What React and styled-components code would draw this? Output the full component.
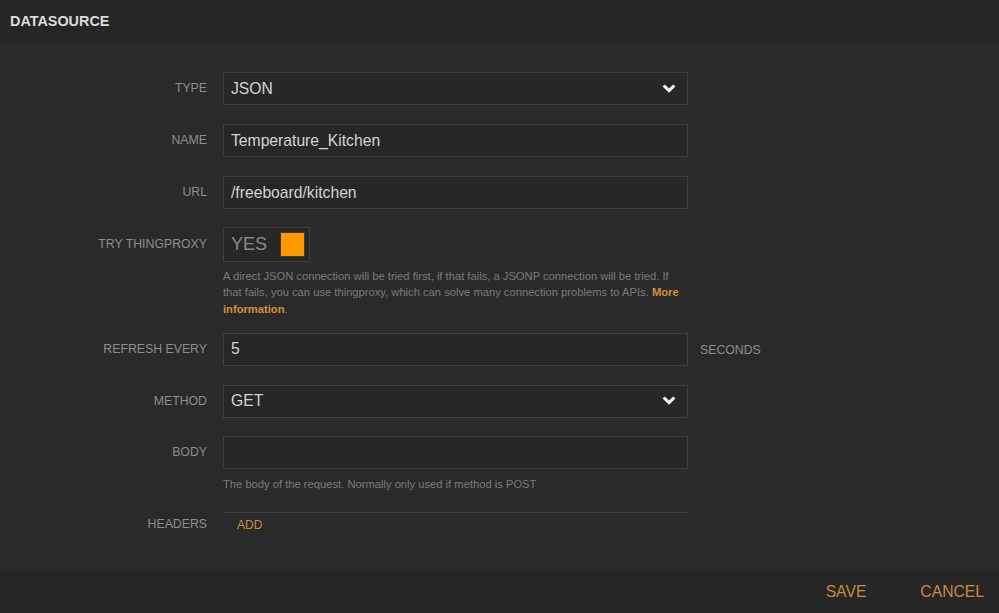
import styled, { createGlobalStyle } from 'styled-components'

const GlobalStyle = createGlobalStyle`
    html, body {
        margin: 0;
        padding: 0;
        background: #2a2a2a;
    }
    * {
        box-sizing: border-box;
    }
`;

const Dialog = styled.div`
    width: 999px;
    height: 613px;
    display: flex;
    flex-direction: column;
    background: #2a2a2a;
    font-family: 'Liberation Sans', Arial, sans-serif;
`;

const Header = styled.header`
    height: 43px;
    flex-shrink: 0;
    display: flex;
    align-items: center;
    padding: 0 0 2px 10px;
    background: #262626;
    color: #dcdcdc;
    font-size: 14.4px;
    font-weight: 700;
`;

const Body = styled.div`
    flex: 1;
    padding-top: 29px;
`;

const Row = styled.div`
    display: grid;
    grid-template-columns: 207px 465px auto;
    column-gap: 16px;
    align-items: start;
    margin-bottom: ${props => props.gap ?? 19}px;
`;

const Label = styled.div`
    text-align: right;
    font-size: 12.3px;
    line-height: ${props => props.lh ?? 33}px;
    color: #8e8e8e;
    text-transform: uppercase;
    white-space: nowrap;
`;

const Field = styled.div`
    display: flex;
    flex-direction: column;
`;

const Input = styled.div`
    height: 33px;
    display: flex;
    align-items: center;
    justify-content: space-between;
    padding: 0 11px 0 7px;
    background: #272727;
    border: 1px solid #3e3e3e;
    color: #d4d4d4;
    font-size: 15.7px;
`;

const Suffix = styled.div`
    font-size: 12.3px;
    line-height: 35px;
    height: 33px;
    color: #8e8e8e;
    margin-left: -4px;
`;

const Toggle = styled.div`
    width: 87px;
    height: 35px;
    display: flex;
    align-items: center;
    justify-content: space-between;
    padding: 0 4px 0 7px;
    background: #272727;
    border: 1px solid #3e3e3e;
    color: #8a8a8a;
    font-size: 18px;
`;

const Knob = styled.span`
    width: 25px;
    height: 25px;
    background: #ff9900;
    border: 1px solid #3a3a3a;
`;

const Help = styled.div`
    margin-top: ${props => props.top ?? 6}px;
    font-size: 11.2px;
    line-height: 16.3px;
    color: #7c7c7c;
`;

const Link = styled.span`
    color: #d7903a;
    font-weight: 700;
`;

const Table = styled.div`
    border-top: 1px solid #3c3c3c;
    padding: 2px 0 0 14px;
`;

const AddButton = styled.span`
    font-size: 12px;
    line-height: 21px;
    color: #cc8d3e;
`;

const Footer = styled.footer`
    height: 43px;
    flex-shrink: 0;
    display: flex;
    align-items: center;
    justify-content: flex-end;
    gap: 54px;
    padding-right: 15px;
    background: #262626;
`;

const FooterButton = styled.span`
    font-size: 15.7px;
    color: #c98b3f;
    text-transform: uppercase;
`;

function Chevron() {
    return (
        <svg width="14" height="10" viewBox="0 0 14 10">
            <path d="M0.5 2.6 L2.8 0.4 L7 4.4 L11.2 0.4 L13.5 2.6 L7 8.8 Z" fill="#f2f2f2" />
        </svg>
    )
}

export default function App() {
    return (
        <>
            <GlobalStyle />
            <Dialog>
                <Header>DATASOURCE</Header>
                <Body>
                    <Row>
                        <Label>Type</Label>
                        <Input>JSON<Chevron /></Input>
                    </Row>
                    <Row>
                        <Label>Name</Label>
                        <Input>Temperature_Kitchen</Input>
                    </Row>
                    <Row gap={18}>
                        <Label>URL</Label>
                        <Input>/freeboard/kitchen</Input>
                    </Row>
                    <Row gap={16}>
                        <Label lh={35}>Try thingproxy</Label>
                        <Field>
                            <Toggle>YES<Knob /></Toggle>
                            <Help>
                                A direct JSON connection will be tried first, if that fails, a JSONP connection will be tried. If
                                that fails, you can use thingproxy, which can solve many connection problems to APIs. <Link>More information</Link>.
                            </Help>
                        </Field>
                    </Row>
                    <Row>
                        <Label>Refresh every</Label>
                        <Input>5</Input>
                        <Suffix>SECONDS</Suffix>
                    </Row>
                    <Row gap={18}>
                        <Label>Method</Label>
                        <Input>GET<Chevron /></Input>
                    </Row>
                    <Row gap={20}>
                        <Label>Body</Label>
                        <Field>
                            <Input />
                            <Help top={7}>The body of the request. Normally only used if method is POST</Help>
                        </Field>
                    </Row>
                    <Row>
                        <Label lh={25}>Headers</Label>
                        <Table>
                            <AddButton>ADD</AddButton>
                        </Table>
                    </Row>
                </Body>
                <Footer>
                    <FooterButton>Save</FooterButton>
                    <FooterButton>Cancel</FooterButton>
                </Footer>
            </Dialog>
        </>
    )
}
